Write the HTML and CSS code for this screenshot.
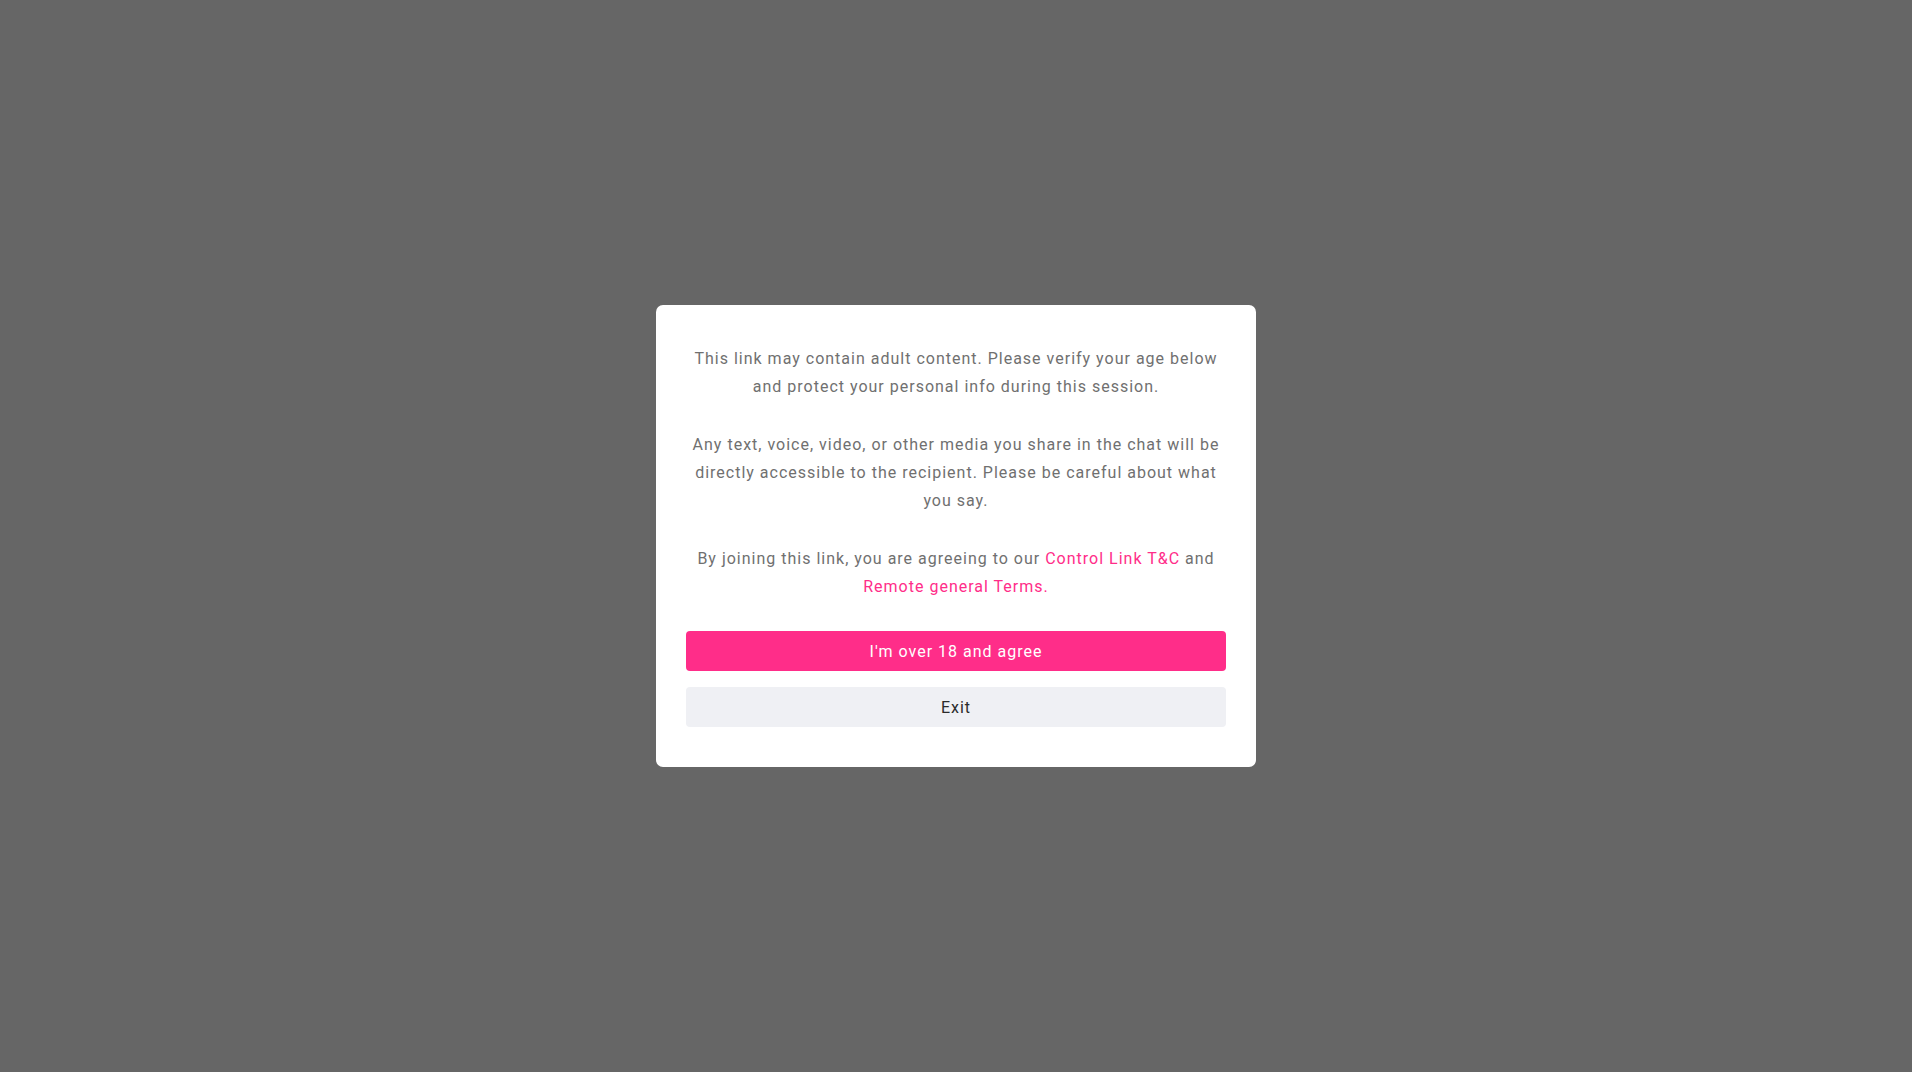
FILE: index.html
```html
<!DOCTYPE html>
<html lang="en">
<head>
<meta charset="utf-8">
<title>Age verification</title>
<link rel="stylesheet" href="styles.css">
</head>
<body>
<div class="overlay">
  <div class="modal">
    <p class="para">This link may contain adult content. Please verify your age below and protect your personal info during this session.</p>
    <p class="para">Any text, voice, video, or other media you share in the chat will be directly accessible to the recipient. Please be careful about what you say.</p>
    <p class="para">By joining this link, you are agreeing to our <a class="link" href="#">Control Link T&amp;C</a> and <a class="link" href="#">Remote general Terms.</a></p>
    <div class="actions">
      <button class="btn btn-primary">I'm over 18 and agree</button>
      <button class="btn btn-secondary">Exit</button>
    </div>
  </div>
</div>
</body>
</html>
```

FILE: styles.css
```css
* { box-sizing: border-box; }
html, body { margin: 0; padding: 0; }
body {
  font-family: Roboto, "Liberation Sans", sans-serif;
  background: #ffffff;
  height: 100vh;
  overflow: hidden;
}
.overlay {
  width: calc(100vw - 8px);
  height: calc(100vh - 8px);
  background: #666666;
  display: flex;
  align-items: center;
  justify-content: center;
}
.modal {
  width: 600px;
  background: #ffffff;
  border-radius: 7px;
  padding: 40px 30px;
  display: flex;
  flex-direction: column;
}
.para {
  margin: 0 0 30px;
  font-size: 16px;
  line-height: 28px;
  letter-spacing: 1px;
  color: #707070;
  text-align: center;
}
.link {
  color: #ff2d89;
  text-decoration: none;
}
.actions {
  display: flex;
  flex-direction: column;
  gap: 16px;
}
.btn {
  width: 100%;
  height: 40px;
  border: none;
  border-radius: 4px;
  font-family: Roboto, "Liberation Sans", sans-serif;
  font-size: 16px;
  letter-spacing: 1px;
  cursor: pointer;
}
.btn-primary {
  background: #ff2d89;
  color: #ffffff;
}
.btn-secondary {
  background: #eff0f4;
  color: #2b2b2b;
}
```
